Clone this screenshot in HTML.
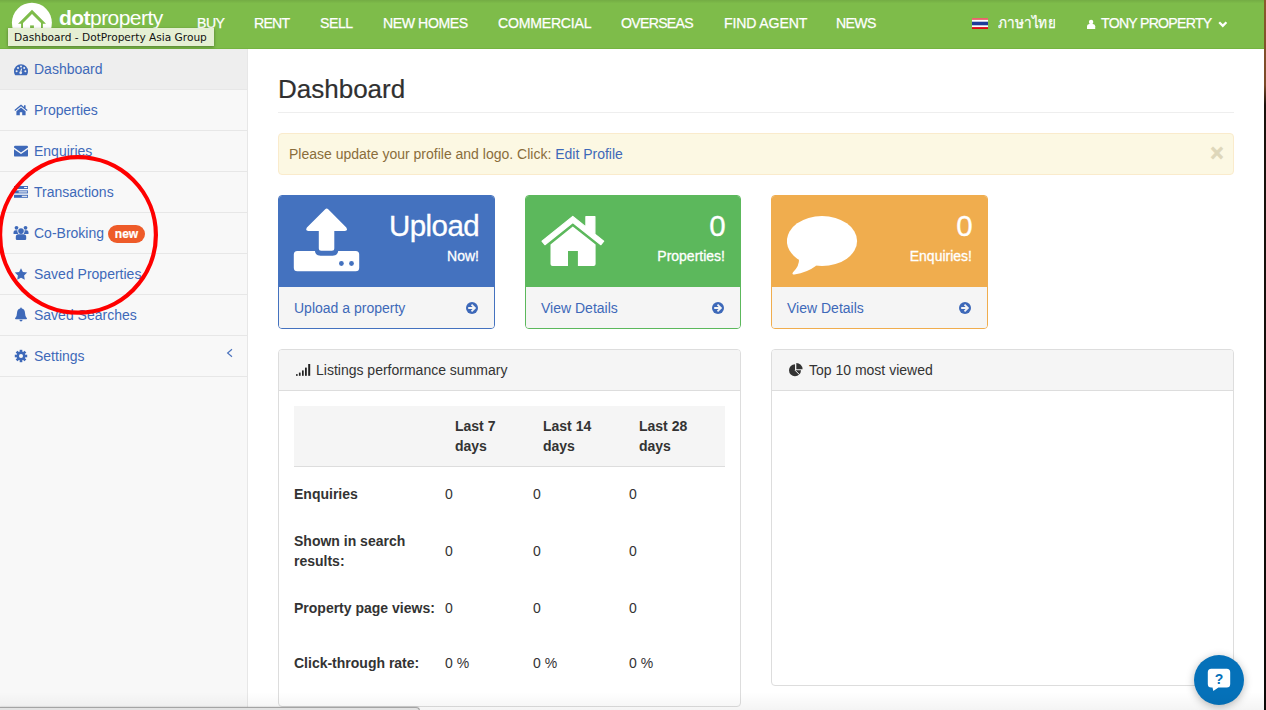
<!DOCTYPE html>
<html lang="en">
<head>
<meta charset="utf-8">
<title>Dashboard - DotProperty Asia Group</title>
<style>
*{box-sizing:border-box;}
html,body{margin:0;padding:0;}
body{width:1266px;height:710px;overflow:hidden;position:relative;background:#fff;font-family:"Liberation Sans",sans-serif;font-size:14px;line-height:20px;color:#333;}
a{color:#3e69b9;text-decoration:none;}
#hdr{position:absolute;left:0;top:0;width:1264px;height:49px;background:linear-gradient(rgba(0,0,0,.085),rgba(0,0,0,0) 3.5px) #7ebc4a;border-bottom:1px solid #74b440;}
#hdr .nav{position:absolute;top:0;left:0;height:48px;}
#hdr .nav a{position:absolute;top:13px;color:#fff;font-size:15px;line-height:20px;letter-spacing:-0.55px;white-space:nowrap;transform:scaleX(.94);transform-origin:0 0;-webkit-text-stroke:0.25px #fff;}
#logo{position:absolute;left:0;top:0;}
#logotxt{position:absolute;left:59px;top:5px;color:#fff;font-size:21px;line-height:26px;letter-spacing:-0.55px;white-space:nowrap;}
#logotxt b{font-weight:bold;}
#tip{position:absolute;left:8px;top:28px;width:206px;height:18px;background:#e5efd3;box-shadow:0 1px 3px rgba(0,0,0,.35);font-family:"DejaVu Sans","Liberation Sans",sans-serif;font-size:10.6px;line-height:19px;color:#111;padding-left:6px;white-space:nowrap;}
#side{position:absolute;left:0;top:49px;width:248px;height:661px;background:#f8f8f8;border-right:1px solid #e7e7e7;}
#side .it{position:relative;height:41px;border-bottom:1px solid #e7e7e7;}
#side .it.act{background:#eeeeee;}
#side .it a{position:absolute;left:34px;top:10px;line-height:20px;font-size:14px;color:#3e69b9;white-space:nowrap;}
#side .it svg{position:absolute;left:14px;top:14px;}
.badge{position:absolute;left:108px;top:12px;width:37px;height:18px;background:#ee5b29;color:#fff;font-weight:bold;font-size:12px;line-height:19px;border-radius:9px;text-align:center;-webkit-text-stroke:0.2px #fff;}
#main{position:absolute;left:278px;top:48px;width:956px;}
h1{position:absolute;left:0;top:23px;margin:0;font-size:26px;line-height:36px;font-weight:normal;color:#303030;-webkit-text-stroke:0.2px #303030;white-space:nowrap;}
#hr{position:absolute;left:0;top:64px;width:956px;height:1px;background:#eee;}
#alert{position:absolute;left:0;top:85px;width:956px;height:42px;background:#fcf8e3;border:1px solid #faebcc;border-radius:4px;color:#8a6d3b;padding:10px 10px;line-height:20px;}
#alert .x{position:absolute;right:9.3px;top:9px;font-size:23px;font-weight:bold;color:#ded7ba;-webkit-text-stroke:0.6px #ded7ba;line-height:20px;}
.card{position:absolute;top:147px;width:217px;height:134px;border:1px solid;border-radius:4px;overflow:hidden;background:#f5f5f5;}
.card .hd{height:91px;position:relative;color:#fff;-webkit-text-stroke:0.3px #fff;}
.card .big{position:absolute;right:15px;top:10px;font-size:29.5px;line-height:40px;letter-spacing:-0.6px;white-space:nowrap;}
.card .sm{position:absolute;right:15px;top:50px;font-size:14px;line-height:20px;letter-spacing:0;white-space:nowrap;}
.card .ft{position:absolute;left:0;top:91px;width:100%;height:42px;background:#f5f5f5;}
.card .ft a{position:absolute;left:15px;top:11px;line-height:20px;white-space:nowrap;}
.card .ft svg{position:absolute;right:16px;top:15px;}
.panel{position:absolute;top:301px;width:463px;border:1px solid #ddd;border-radius:4px;background:#fff;}
.panel .ph{position:relative;height:41px;background:#f5f5f5;border-bottom:1px solid #ddd;border-radius:3px 3px 0 0;padding:10px 15px 10px 37px;line-height:20px;color:#333;white-space:nowrap;}
table{position:absolute;left:15px;top:56px;border-collapse:collapse;width:431px;}
th,td{text-align:left;vertical-align:middle;padding:0;color:#333;line-height:20px;}
tr.th{height:60px;background:#f5f5f5;border-bottom:1px solid #ddd;}
tr.th th{padding-left:10px;font-weight:bold;}
td.l{font-weight:bold;}
td{padding-bottom:2px;}
</style>
</head>
<body>
<div id="hdr">
  <svg id="logo" width="60" height="49" viewBox="0 0 60 49">
    <circle cx="31.9" cy="22.8" r="20" fill="#fff"/>
    <path d="M32 9.7 L46 23.7 H42.9 V36 H41 V23 L32 14 L23 23 V36 H21.1 V23.7 H18 Z" fill="#7ebc4a"/>
    <rect x="30.1" y="25.4" width="3.8" height="4" fill="#7ebc4a"/>
  </svg>
  <div id="logotxt"><b>dot</b>property</div>
  <div class="nav">
    <a style="left:196.6px;letter-spacing:-0.53px">BUY</a>
    <a style="left:254px;letter-spacing:-0.80px">RENT</a>
    <a style="left:320px;letter-spacing:-0.46px">SELL</a>
    <a style="left:383px;letter-spacing:-0.45px">NEW HOMES</a>
    <a style="left:498px;letter-spacing:-0.24px">COMMERCIAL</a>
    <a style="left:621px;letter-spacing:-0.75px">OVERSEAS</a>
    <a style="left:724px;letter-spacing:-0.15px">FIND AGENT</a>
    <a style="left:836px;letter-spacing:-0.68px">NEWS</a>
    <a style="left:998px;letter-spacing:0;font-size:14.5px;top:12.5px;width:61px;overflow:hidden">ภาษาไทย</a>
    <a style="left:1101px;letter-spacing:-0.77px">TONY PROPERTY</a>
  </div>
  <svg style="position:absolute;left:972px;top:18px" width="16" height="11" viewBox="0 0 16 11"><rect width="16" height="11" fill="#fff"/><rect width="16" height="1.9" fill="#e8636b"/><rect y="9.1" width="16" height="1.9" fill="#dc0c16"/><rect y="3.7" width="16" height="3.6" fill="#1f3d99"/></svg>
  <svg style="position:absolute;left:1087px;top:19px" width="9" height="10" viewBox="0 0 9 10"><circle cx="4.1" cy="3" r="2.2" fill="#fff"/><path d="M0 9.9 V7.2 Q0 5 2.2 4.9 H6 Q8.2 5 8.2 7.2 V9.9 Z" fill="#fff"/></svg>
  <svg style="position:absolute;left:1217px;top:20px" width="12" height="9" viewBox="0 0 12 9"><path d="M2.2 2.2 L5.8 5.8 L9.4 2.2" fill="none" stroke="#fff" stroke-width="2.3"/></svg>
</div>
<div id="tip">Dashboard - DotProperty Asia Group</div>

<div id="side">
  <div class="it act"><svg width="14" height="12" viewBox="0 0 14 12" style="top:15px"><path d="M7 0.3 A7 7 0 0 0 0 7.3 C0 8.9 0.5 10.2 1.3 11.3 H12.7 C13.5 10.2 14 8.9 14 7.3 A7 7 0 0 0 7 0.3 Z" fill="#3e69b9"/><circle cx="2.6" cy="7.3" r="1" fill="#eee"/><circle cx="4" cy="4" r="1" fill="#eee"/><circle cx="7" cy="2.6" r="1" fill="#eee"/><circle cx="10.2" cy="4" r="1" fill="#eee"/><circle cx="11.4" cy="7.3" r="1" fill="#eee"/><path d="M7.6 4.6 L6.7 8" stroke="#eee" stroke-width="1.1" fill="none"/><circle cx="6.7" cy="8.8" r="1.4" fill="#eee"/></svg><a>Dashboard</a></div>
  <div class="it"><svg width="14" height="12" viewBox="0 0 14 12" style="top:14px"><path d="M7 0.6 L0.4 6.1 L1.2 7 L7 2.2 L12.8 7 L13.6 6.1 L11.6 4.4 V1.2 H10 V3.1 Z" fill="#3e69b9"/><path d="M7 3.4 L2.4 7.2 V11.2 H5.8 V8.2 H8.2 V11.2 H11.6 V7.2 Z" fill="#3e69b9"/></svg><a>Properties</a></div>
  <div class="it"><svg width="14" height="12" viewBox="0 0 14 12" style="top:14px"><path d="M1.2 0.8 H12.8 Q14 0.8 14 2 V2.6 L7 7.4 L0 2.6 V2 Q0 0.8 1.2 0.8 Z" fill="#3e69b9"/><path d="M0 4.2 L7 9 L14 4.2 V10.4 Q14 11.6 12.8 11.6 H1.2 Q0 11.6 0 10.4 Z" fill="#3e69b9"/></svg><a>Enquiries</a></div>
  <div class="it"><svg width="14" height="12" viewBox="0 0 14 12" style="top:14px"><rect x="0" y="0" width="14" height="3" fill="#3e69b9"/><rect x="0" y="4.4" width="14" height="3" fill="#3e69b9"/><rect x="0" y="8.8" width="14" height="3" fill="#3e69b9"/><rect x="10.1" y="0.95" width="3.1" height="1.1" fill="#f8f8f8"/><rect x="4.7" y="5.35" width="8.5" height="1.1" fill="#f8f8f8"/><rect x="7.8" y="9.75" width="5.4" height="1.1" fill="#f8f8f8"/></svg><a>Transactions</a></div>
  <div class="it"><svg width="16" height="16" viewBox="0 0 16 16" style="top:12px;left:13px"><circle cx="3.5" cy="2.8" r="1.9" fill="#3e69b9"/><circle cx="12.5" cy="2.8" r="1.9" fill="#3e69b9"/><path d="M0.5 8.9 V7.2 Q0.5 5.2 2.5 5.2 H4.8 Q4.2 7.5 5.8 8.9 Z" fill="#3e69b9"/><path d="M15.5 8.9 V7.2 Q15.5 5.2 13.5 5.2 H11.2 Q11.8 7.5 10.2 8.9 Z" fill="#3e69b9"/><circle cx="8" cy="6.1" r="3.5" fill="#f8f8f8"/><circle cx="8" cy="6.1" r="2.8" fill="#3e69b9"/><path d="M2.8 14 V11.8 Q2.8 9.3 5.4 9.3 H10.6 Q13.2 9.3 13.2 11.8 V14 Q13.2 15.1 12 15.1 H4 Q2.8 15.1 2.8 14 Z" fill="#3e69b9"/></svg><a>Co-Broking</a><span class="badge">new</span></div>
  <div class="it"><svg width="14" height="12" viewBox="0 0 14 12" style="top:14px;left:14px"><path d="M7 0.2 L8.9 4 L13.2 4.6 L10.1 7.6 L10.8 11.8 L7 9.8 L3.2 11.8 L3.9 7.6 L0.8 4.6 L5.1 4 Z" fill="#3e69b9"/></svg><a>Saved Properties</a></div>
  <div class="it"><svg width="14" height="15" viewBox="0 0 14 15" style="top:12px;left:14px"><path d="M7 0.4 Q7.8 0.4 7.8 1.4 Q11 2.2 11 6 Q11 9.6 13 11.4 Q13 12.2 12.2 12.2 H1.8 Q1 12.2 1 11.4 Q3 9.6 3 6 Q3 2.2 6.2 1.4 Q6.2 0.4 7 0.4 Z" fill="#3e69b9"/><path d="M5.4 12.8 H8.6 Q8.4 14.4 7 14.4 Q5.6 14.4 5.4 12.8 Z" fill="#3e69b9"/></svg><a>Saved Searches</a></div>
  <div class="it"><svg width="14" height="14" viewBox="0 0 14 14" style="top:13px;left:14px"><g transform="translate(7,7)"><circle r="4.4" fill="#3e69b9"/><g fill="#3e69b9"><rect x="-1.3" y="-6.2" width="2.6" height="12.4"/><rect x="-1.3" y="-6.2" width="2.6" height="12.4" transform="rotate(45)"/><rect x="-1.3" y="-6.2" width="2.6" height="12.4" transform="rotate(90)"/><rect x="-1.3" y="-6.2" width="2.6" height="12.4" transform="rotate(135)"/></g><circle r="2" fill="#f8f8f8"/></g></svg><a>Settings</a><svg width="7" height="10" viewBox="0 0 7 10" style="left:226px;top:12px"><path d="M6 1.2 L1.6 5 L6 8.8" fill="none" stroke="#4a72bd" stroke-width="1.15"/></svg></div>
</div>

<div id="main">
  <h1>Dashboard</h1>
  <div id="hr"></div>
  <div id="alert">Please update your profile and logo. Click: <a>Edit Profile</a><span class="x">×</span></div>

  <div class="card" style="left:0;border-color:#4472bf">
    <div class="hd" style="background:#4472bf"><svg style="position:absolute;left:14px;top:12px" width="67" height="64" viewBox="-1 0 67 64"><path d="M31.2 1.2 Q32.7 -0.3 34.2 1.2 L52.3 19.6 Q54.3 23 50.8 23 H40.3 V40.2 Q40.3 42.7 37.8 42.7 H27.3 Q24.8 42.7 24.8 40.2 V23 H14.4 Q10.9 23 12.9 19.6 Z" fill="#fff"/><path d="M3.3 43 H20.9 Q21.5 47.8 26.5 47.8 H38.6 Q43.6 47.8 44.2 43 H61.7 Q65.2 43 65.2 46.5 V59.8 Q65.2 63.3 61.7 63.3 H3.3 Q-0.2 63.3 -0.2 59.8 V46.5 Q-0.2 43 3.3 43 Z" fill="#fff"/><circle cx="47.4" cy="55.5" r="2.4" fill="#4472bf"/><circle cx="57.5" cy="55.5" r="2.4" fill="#4472bf"/></svg><div class="big">Upload</div><div class="sm">Now!</div></div>
    <div class="ft"><a>Upload a property</a><svg width="12" height="12" viewBox="0 0 12 12"><circle cx="6" cy="6" r="6" fill="#3e69b9"/><path d="M2.2 6 H8.6 M5.5 2.7 L8.9 6 L5.5 9.3" fill="none" stroke="#f5f5f5" stroke-width="1.8"/></svg></div>
  </div>
  <div class="card" style="left:247px;width:216px;border-color:#5cb85c">
    <div class="hd" style="background:#5cb85c"><svg style="position:absolute;left:14px;top:14px" width="67" height="58" viewBox="0 0 67 58"><path d="M32.8 6.4 L45.9 16.9 V6.6 H54.9 V24.1 L63.7 31.2 L60.9 34.7 L32.8 12.5 L4.9 34.7 L2 31.2 Z" fill="#fff" stroke="#fff" stroke-width="1.2" stroke-linejoin="round"/><path d="M32.8 16.5 L10.5 34.4 V54 Q10.5 56 12.5 56 H28 V41 H37.9 V56 H53.6 Q55.6 56 55.6 54 V34.4 Z" fill="#fff"/></svg><div class="big">0</div><div class="sm">Properties!</div></div>
    <div class="ft"><a>View Details</a><svg width="12" height="12" viewBox="0 0 12 12"><circle cx="6" cy="6" r="6" fill="#3e69b9"/><path d="M2.2 6 H8.6 M5.5 2.7 L8.9 6 L5.5 9.3" fill="none" stroke="#f5f5f5" stroke-width="1.8"/></svg></div>
  </div>
  <div class="card" style="left:493px;border-color:#f0ad4e">
    <div class="hd" style="background:#f0ad4e"><svg style="position:absolute;left:15px;top:14px" width="72" height="68" viewBox="0 0 72 68"><ellipse cx="35" cy="31" rx="35.1" ry="25" fill="#fff"/><path d="M12 49 Q12.5 56 6 62.2 Q4.4 64.6 7.4 64.6 Q20 62.5 29.5 55.4 Z" fill="#fff"/></svg><div class="big">0</div><div class="sm">Enquiries!</div></div>
    <div class="ft"><a>View Details</a><svg width="12" height="12" viewBox="0 0 12 12"><circle cx="6" cy="6" r="6" fill="#3e69b9"/><path d="M2.2 6 H8.6 M5.5 2.7 L8.9 6 L5.5 9.3" fill="none" stroke="#f5f5f5" stroke-width="1.8"/></svg></div>
  </div>

  <div class="panel" style="left:0;height:358px">
    <div class="ph"><svg width="15" height="12" viewBox="0 0 15 12" style="position:absolute;left:17px;top:14px"><rect x="0" y="10.2" width="1.7" height="1.6" fill="#222"/><rect x="2.9" y="8.6" width="1.7" height="3.2" fill="#222"/><rect x="6" y="6.4" width="1.7" height="5.4" fill="#222"/><rect x="9" y="3.6" width="1.8" height="8.2" fill="#222"/><rect x="12.2" y="0" width="2" height="11.8" fill="#222"/></svg>Listings performance summary</div>
    <table>
      <tr class="th"><th style="width:151px"></th><th style="width:88px">Last 7<br>days</th><th style="width:96px">Last 14<br>days</th><th>Last 28<br>days</th></tr>
      <tr style="height:57px"><td class="l">Enquiries</td><td>0</td><td>0</td><td>0</td></tr>
      <tr style="height:57px"><td class="l">Shown in search<br>results:</td><td>0</td><td>0</td><td>0</td></tr>
      <tr style="height:57px"><td class="l">Property page views:</td><td>0</td><td>0</td><td>0</td></tr>
      <tr style="height:53px"><td class="l">Click-through rate:</td><td>0 %</td><td>0 %</td><td>0 %</td></tr>
    </table>
  </div>
  <div class="panel" style="left:493px;height:337px">
    <div class="ph"><svg width="14" height="14" viewBox="0 0 14 14" style="position:absolute;left:17px;top:13px"><path d="M6 1.2 A6 6 0 1 0 12 7.2 H6 Z" fill="#333"/><path d="M6 7.2 L10.6 11.8" stroke="#f5f5f5" stroke-width="1" fill="none"/><path d="M7.3 0 A6.3 6.3 0 0 1 13.6 6.2 H7.3 Z" fill="#333"/></svg>Top 10 most viewed</div>
  </div>
</div>

<svg style="position:absolute;left:0;top:150px" width="165" height="172" viewBox="0 0 165 172">
  <ellipse cx="78" cy="84.9" rx="77.9" ry="77.8" fill="none" stroke="#fe0000" stroke-width="4.2"/>
</svg>
<div style="position:absolute;left:1194px;top:655px;width:50px;height:50px;border-radius:25px;background:#0571b9;box-shadow:0 2px 8px rgba(0,0,0,.28)">
  <svg style="position:absolute;left:13px;top:13px" width="24" height="24" viewBox="0 0 24 24"><path d="M4.3 0.8 H19.700000000000003 Q23.2 0.8 23.2 4.3 V16 Q23.2 19.5 19.7 19.5 H11.4 L6.3 23.1 L5.5 19.5 H4.3 Q0.8 19.5 0.8 16 V4.3 Q0.8 0.8 4.3 0.8 Z" fill="#fff"/><text x="12" y="15.9" text-anchor="middle" font-family="Liberation Sans, sans-serif" font-weight="bold" font-size="14" fill="#0571b9">?</text></svg>
</div>
<div style="position:absolute;left:0;top:692px;width:1264px;height:18px;background:linear-gradient(rgba(0,0,0,0),rgba(0,0,0,.045))"></div>
<div style="position:absolute;left:0;top:707px;width:420px;height:4px;background:#e2e2e2;border-top:1px solid #a4a4a4;border-right:1px solid #a4a4a4;border-radius:0 4px 0 0;box-shadow:0 -1px 1px rgba(0,0,0,.08)"></div><div style="position:absolute;left:1264px;top:0;width:2px;height:710px;background:linear-gradient(#8a5a2c 0,#7a4a28 85px,#1a120c 105px,#0c0a08 100%)"></div>
</body>
</html>
